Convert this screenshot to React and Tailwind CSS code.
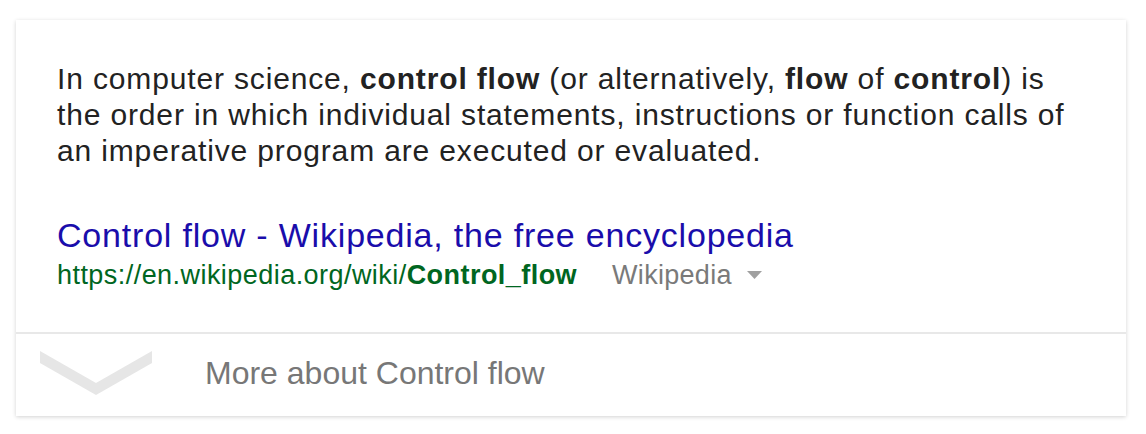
import React from "react";

const Chevron = () => (
  <svg width="112" height="44" viewBox="0 0 112 44" className="shrink-0">
    <polygon points="0,0 56,32 112,0 112,12 56,44 0,12" fill="#e6e6e6" />
  </svg>
);

export default function App() {
  return (
    <div className="w-[1146px] h-[434px] bg-white pt-5 pl-4 font-['Liberation_Sans',Arial,sans-serif]">
      <div className="w-[1110px] h-[396px] bg-white shadow-[0_1px_4px_rgba(0,0,0,0.18)] flex flex-col">
        <div className="px-[41px] pt-[41px] h-[312px]">
          <p className="text-[30px] leading-[36px] tracking-[0.85px] text-[#222]">
            In computer science, <b>control flow</b> (or alternatively, <b>flow</b> of <b>control</b>) is
            the order in which individual statements, instructions or function calls of an imperative
            program are executed or evaluated.
          </p>
          <div className="mt-[47px] text-[34px] leading-[38px] tracking-[0.8px] text-[#1a0dab]">
            Control flow - Wikipedia, the free encyclopedia
          </div>
          <div className="mt-1 flex items-center text-[27px] leading-[34px]">
            <span className="text-[#006621] tracking-[0.45px]">
              https://en.wikipedia.org/wiki/<b>Control_flow</b>
            </span>
            <span className="ml-[35px] text-[#7a7a7a] tracking-[0.3px]">Wikipedia</span>
            <svg width="15" height="8" viewBox="0 0 15 8" className="ml-[15px]">
              <polygon points="0,0 15,0 7.5,8" fill="#a0a0a0" />
            </svg>
          </div>
        </div>
        <div className="h-[2px] bg-[#e8e8e8]" />
        <div className="flex items-center flex-1 pl-6 pb-1">
          <Chevron />
          <span className="ml-[53px] text-[32px] text-[#777]">More about Control flow</span>
        </div>
      </div>
    </div>
  );
}
